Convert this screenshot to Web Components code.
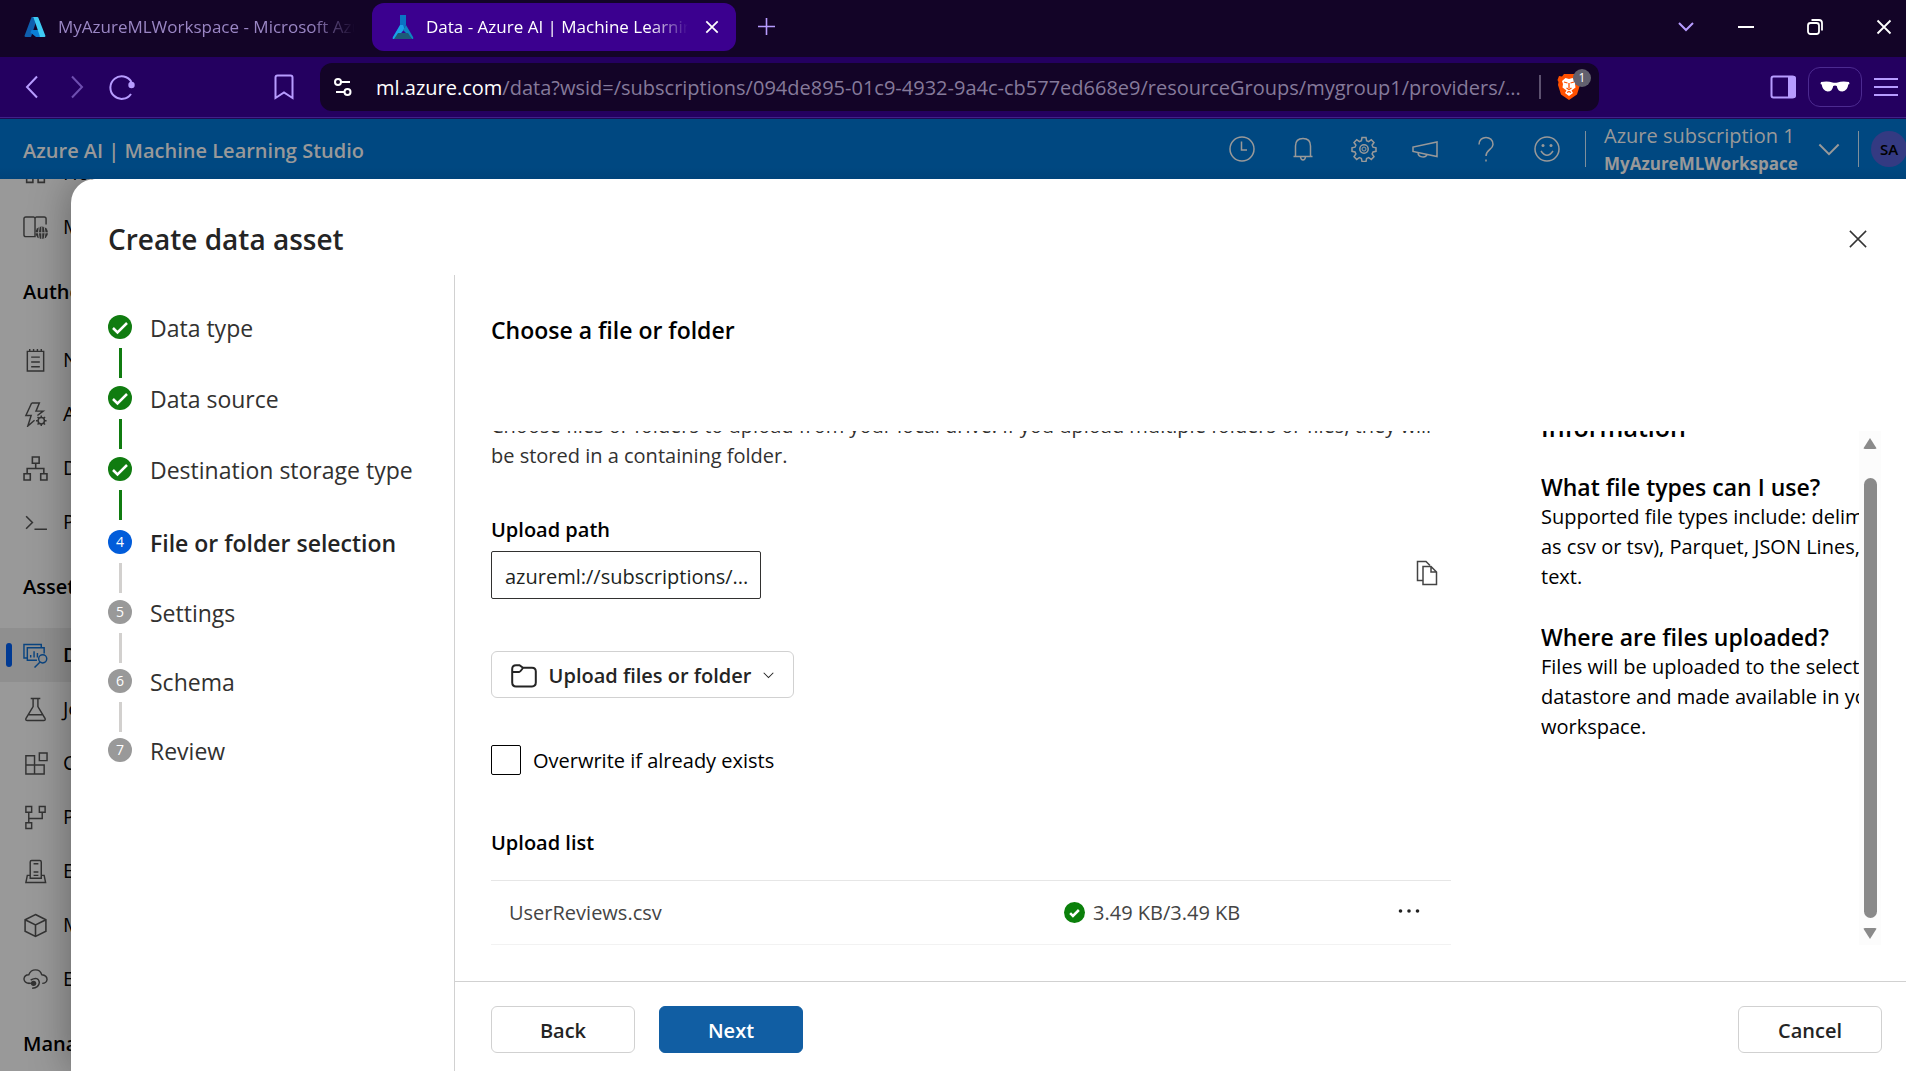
<!DOCTYPE html>
<html lang="en">
<head>
<meta charset="utf-8">
<title>Data - Azure AI | Machine Learning Studio</title>
<style>
html, body { height: 100%; }
body { margin: 0; overflow: hidden; font-family: "Open Sans", "Noto Sans", sans-serif; font-size: 20px; line-height: 30px; color: #000; }
ml-app { height: 100%; }
</style>
</head>
<body>
<ml-app></ml-app>
<script>
const ICONS = {
  azure: ['0 0 24 24', '<path fill="#0f5fae" d="M8.600 2h6L8.200 21.500c-.2.500-.7.500-1 .5H2.600c-.8 0-1.300-.6-1-1.400z"/><path fill="#0b7fd6" d="M17.200 15H8.500l-1 2.500L13 22h6z"/><path fill="#3ecbf4" d="M15.300 2.600c-.2-.4-.5-.6-1-.6H9.500c.5 0 .8.200 1 .6l6.300 18.300c.2.600-.2 1.100-.8 1.100h5.600c.6 0 1-.6.800-1.200z"/>'],
  mlflask: ['0 0 24 26', '<path fill="#0a74c4" d="M9 1h6v10l-3 5L5 25H3q-2 0-1-2L9 12z"/><path fill="#1aa0e8" d="M9 11h3l1.500 4L5 25H3q-2 0-1-2z"/><path fill="#0d86c2" d="M15 11l7 12q1 2-1 2l-9-9z"/><path fill="#1c5a78" d="M3 25l4-6h10l4 6z"/>'],
  close: ['0 0 16 16', '<path d="M1.500 1.500l13 13M14.500 1.500l-13 13"/>'],
  plus: ['0 0 16 16', '<path d="M8 0v16M0 8h16"/>'],
  down: ['0 0 16 10', '<path d="M1 1l7 7 7-7"/>'],
  min: ['0 0 16 16', '<path d="M0 8h16"/>'],
  restore: ['0 0 16 16', '<rect x="1" y="4" width="11" height="11" rx="2.500"/><path d="M4.500 1H12q3 0 3 3v7.500"/>'],
  back: ['0 0 14 24', '<path d="M12 1.500L2 12l10 10.500"/>'],
  fwd: ['0 0 14 24', '<path d="M2 1.500L12 12 2 22.500"/>'],
  reload: ['0 0 26 26', '<path d="M22 20A11.300 11.300 0 1 1 22.500 8"/><circle cx="22.500" cy="11" r="3.200" fill="currentColor" stroke="none"/>'],
  bookmark: ['0 0 20 26', '<path d="M1.500 24V3.500q0-2 2-2h13q2 0 2 2V24L10 18.500z"/>'],
  tune: ['0 0 20 20', '<circle cx="5" cy="5" r="3"/><path d="M8 5h9M3 15h8"/><circle cx="14.500" cy="15" r="3"/>'],
  brave: ['0 0 24 28', '<path fill="#ff5000" d="M7 1h10l2 2.500 3-.5 1.500 4-1 2 .5 3-3 9.500L12 27l-8-5.500L1 12l.5-3-1-2L2 3l3 .5z"/><path fill="#fff" d="M12 6l3.500-1 3.500 3-1 3 .5 3.500-4 3 1.500 2.500-4 3-4-3L9.500 17.500l-4-3L6 11 5 8l3.500-3z"/><path stroke="#ff5000" stroke-width="1.300" fill="none" d="M7 9l3.500 1M17 9l-3.500 1M12 10v5M9.500 15l2.500 1.500 2.500-1.500M10 19.500l2-1 2 1"/>'],
  panel: ['0 0 26 24', '<rect x="1.500" y="1.500" width="23" height="21" rx="2"/><path fill="currentColor" stroke="none" d="M18 1h6q2 0 2 2v18q0 2-2 2h-6z"/>'],
  glasses: ['0 0 30 14', '<path fill="currentColor" d="M1 2q7-1 11.500.5 2.500.5 5 0Q22 1 29 2l.5 2-1.200.6Q27.500 11 22.500 11.500 17.500 11.500 16.800 6q-1.800-1-3.600 0-.7 5.500-5.700 5.500Q2.500 11 1.700 4.600L.5 4z"/>'],
  menu: ['0 0 24 20', '<path d="M0 2h24M0 10h24M0 18h24"/>'],
  clock: ['0 0 26 26', '<circle cx="13" cy="13" r="12"/><path d="M12.500 5.500V14H18"/>'],
  bell: ['0 0 26 26', '<path d="M3.500 20.500h19M5.500 20.500V10q0-7.500 7.500-7.500T20.500 10v10.500M10.500 21q.5 3 2.500 3t2.500-3"/>'],
  gear: ['0 0 26 26', '<circle cx="13" cy="13" r="4.200"/><circle cx="13" cy="13" r="2" stroke-width="1"/><path d="M11 1.500h4l.6 3.200 2 .9 2.700-1.900 2.700 2.800-1.900 2.700.9 2 3 .6v3.500l-3 .7-.9 2 1.900 2.700-2.700 2.700-2.700-1.900-2 .9-.6 3.100h-4l-.6-3.100-2-.9-2.700 1.900L3 20.700 4.900 18 4 16l-3-.7v-3.500l3-.6.9-2L3 6.500l2.700-2.800 2.700 1.900 2-.9z"/>'],
  horn: ['0 0 26 26', '<path d="M25 6v14.500L1 15.500v-4.500zM6 16.500c0 5 7.500 6 9 2"/>'],
  help: ['0 0 26 26', '<path d="M6 8.500C6-1 20-1 20 8.500c0 5-7 5-7 11.500M13 23.500v2"/>'],
  smile: ['0 0 26 26', '<circle cx="13" cy="13" r="12"/><path d="M7 15q6 8.500 12 0"/><circle cx="9" cy="9.500" r="1.500" fill="currentColor" stroke="none"/><circle cx="17" cy="9.500" r="1.500" fill="currentColor" stroke="none"/>'],
  copy: ['0 0 24 26', '<path d="M8 20.500H2.500V1.500H11l4 4"/><path d="M8 6.500h8l5.500 5.500v12.500H8zM16 6.500V12h5.500"/>'],
  folder: ['0 0 26 24', '<path d="M1.200 5q0-3.800 3.800-3.800h3.500l3.500 2.600h9q3.800 0 3.800 3.800v11q0 3.800-3.800 3.800H5q-3.800 0-3.800-3.800zM1.200 8h7q1 0 3.800-4.200"/>'],
  check: ['0 0 24 24', '<path d="M5 13l4.500 4.500L19 8"/>'],
  dots: ['0 0 22 4', '<g fill="currentColor" stroke="none"><circle cx="2.500" cy="2" r="1.800"/><circle cx="11" cy="2" r="1.800"/><circle cx="19.500" cy="2" r="1.800"/></g>'],
  home: ['0 0 24 24', '<path d="M3.500 3.500h6v6h-6zM14.500 3.500h6v6h-6zM3.500 14.500h6v6h-6zM14.500 14.500h6v6h-6z"/>'],
  book: ['0 0 26 26', '<path d="M12.500 22.500H3q-2 0-2-2V4q0-2 2-2h8q1.500 0 1.500 2zM12.500 20V4q0-2 1.500-2h8q2 0 2 2v6"/><circle cx="19.500" cy="18.500" r="6.500" fill="currentColor" stroke="none"/><path stroke="#969696" stroke-width="1" d="M13 18.500h13M19.500 12v13M17 12q-2 6.500 0 13M22 12q2 6.500 0 13"/>'],
  note: ['0 0 24 26', '<path d="M3.500 3.500h17v20.500h-17zM7.500 9.500h9M7.500 14.500h9M7.500 19.500h9M6 1v2.500M10 1v2.500M14 1v2.500M18 1v2.500"/>'],
  bolt: ['0 0 26 26', '<path d="M9 1h8l-3.500 8.500H21L15 14M9 1L3 14h5.500L5 25l7-6"/><circle cx="19" cy="19.500" r="3.300"/><path d="M19 14v2M19 23v2M13.500 19.500h2M22.500 19.500h2M15.100 15.600l1.400 1.400M21.500 22l1.400 1.400M15.100 23.400l1.400-1.400M21.500 17l1.400-1.400"/>'],
  tree: ['0 0 24 24', '<path d="M9 1h6.500v6H9zM1 17h6v6H1zM17 17h6v6h-6zM12.200 7v5M4 17v-5h16v5"/>'],
  prompt: ['0 0 24 24', '<path d="M3 6l6 6-6 6M11 18.500h12"/>'],
  data: ['0 0 26 26', '<path d="M4 15.500H1V1.500h18v3M14.500 18H4.500V5H22v6M8 12.500V15M11.500 8.500V15M15 10.500V15"/><circle cx="20.500" cy="16.500" r="4.200"/><path d="M17.500 20L12 25.500"/>'],
  flask: ['0 0 24 26', '<path d="M7 1.500h10M9.500 1.500V10L2 22.500q-.5 2 1.500 2h17q2 0 1.500-2L14.500 10V1.500M5 18.500h14"/>'],
  comp: ['0 0 26 26', '<path d="M3 5h9v19H3zM3 14.500h19V24H3zM17 2h8v8h-8z"/>'],
  pipe: ['0 0 26 26', '<path d="M3 1.500h6v6H3zM17 1.500h6v6h-6zM3 18.500h6v6H3zM6 7.500v11M6 14h14V7.500"/>'],
  env: ['0 0 24 26', '<path d="M6.500 20V3q0-1.500 1.500-1.500h8.500Q18 1.500 18 3v17zM6.500 17H3.500L2 24.500h20.500L21 17h-3M10 5h5M10 13.500h5M10 17h5"/>'],
  cube: ['0 0 24 24', '<path d="M12 1.500l10 5v11l-10 5-10-5v-11zM2 6.500l10 5 10-5M12 11.500v11"/>'],
  cloud: ['0 0 26 26', '<path d="M8 17H6Q1.500 16.500 1 12.500 1.500 8 6 8 8 3 13 3t6.500 5q5.500.500 5.500 5-.5 4-5 4M8 13.500q8-4 9 2.500-.5 6-7.500 6"/><circle cx="11" cy="17" r="2.800" fill="currentColor" stroke="none"/><path d="M8 17h-3"/>']
};

function define(name, css, html) {
  customElements.define(name, class extends HTMLElement {
    connectedCallback() {
      if (this.shadowRoot) return;
      const root = this.attachShadow({ mode: 'open' });
      const markup = typeof html === 'function' ? html(this) : html;
      root.innerHTML = '<style>*{box-sizing:border-box}button,input{font:inherit;color:inherit;margin:0}button{background:none;border:0;padding:0;display:flex;align-items:center;justify-content:center}' + css + '</style>' + markup;
    }
  });
}

define('ml-icon', ':host{display:block;flex:none}svg{display:block;width:100%;height:100%}', el => {
  const name = el.getAttribute('name');
  const [box, body] = ICONS[name];
  return `<svg viewBox="${box}" fill="none" stroke="${/azure|mlflask|brave|glasses/.test(name) ? 'none' : 'currentColor'}" stroke-width="${el.getAttribute('weight') || 1.5}" aria-hidden="true">${body}</svg>`;
});

define('browser-tab', `
:host{display:flex;align-items:center;gap:11px;height:48px;padding:0 17px 0 19px;border-radius:12px;color:#9a86c4;font-size:17px}
:host([active]){background:#3b008f;color:#fff}
.fav{width:24px;height:26px}
a{flex:1;min-width:0;overflow:hidden;white-space:nowrap;color:inherit;text-decoration:none;-webkit-mask-image:linear-gradient(90deg,#000 85%,transparent);mask-image:linear-gradient(90deg,#000 85%,transparent)}
button{width:14px;height:14px;margin-left:6px}button ml-icon{width:14px;height:14px}`,
el => `<ml-icon class="fav" name="${el.getAttribute('icon')}"></ml-icon><a href="#"><slot></slot></a>${el.hasAttribute('active') ? '<button aria-label="Close tab"><ml-icon name="close" weight="2"></ml-icon></button>' : ''}`);

define('browser-tabs', `
:host{display:flex;align-items:center;height:57px;background:#130427;padding:0 14px 4px 4px}
.t1{width:368px}.t2{width:364px}
button{color:#fff}.plus{margin:0 auto 0 22px;color:#b79cff}
.plus ml-icon{width:17px;height:17px}
.v{color:#b79cff;margin-right:44px}.v ml-icon{width:16px;height:10px}
.win{display:flex;gap:53px;align-items:center}.win ml-icon{width:16px;height:16px}`,
`<browser-tab class="t1" icon="azure">MyAzureMLWorkspace - Microsoft Azure</browser-tab>
<browser-tab class="t2" icon="mlflask" active>Data - Azure AI | Machine Learning Studio</browser-tab>
<button class="plus" aria-label="New tab"><ml-icon name="plus" weight="1.500"></ml-icon></button>
<button class="v" aria-label="Tabs"><ml-icon name="down" weight="2"></ml-icon></button>
<div class="win"><button aria-label="Minimize"><ml-icon name="min" weight="2"></ml-icon></button><button aria-label="Restore"><ml-icon name="restore" weight="1.800"></ml-icon></button><button aria-label="Close"><ml-icon name="close" weight="1.800"></ml-icon></button></div>`);

define('browser-bar', `
:host{display:flex;align-items:center;height:62px;background:#240060;border-bottom:1px solid #1d0a54;box-shadow:inset 0 -1px #41208a;box-sizing:border-box;padding:0 8px 1px 25px;color:#b79cff}
.nav{display:flex;align-items:center;width:295px}
.nav .b{width:14px;height:24px}.nav .f{margin-left:31px;opacity:.5}.nav .r{width:26px;height:26px;margin-left:25px}
.nav .m{width:20px;height:26px;margin-left:auto;margin-right:26px}
.nav button{display:block}
.nav ml-icon{width:100%;height:100%}
.url{display:flex;align-items:center;flex:1;min-width:0;height:48px;border-radius:12px;background:#130427;padding:0 8px 0 13px;color:#857a9a}
.url .site{color:#fff;width:20px;height:20px;margin-right:23px}.site ml-icon{width:20px;height:20px}
.addr{flex:1;min-width:0;white-space:nowrap;overflow:hidden;padding-top:2px}.addr b{font-weight:400;color:#fff}
.sep{width:2px;height:24px;background:#5d516f;margin:0 16px 0 8px}
.shield{position:relative;width:34px;height:28px}.shield ml-icon{width:24px;height:28px;margin-right:auto}
.badge{position:absolute;right:0;top:-4px;width:18px;height:18px;border-radius:50%;background:#62606e;color:#fff;font-size:12px;line-height:18px;text-align:center}
.right{display:flex;align-items:center;gap:12px;margin-left:171px}
.p ml-icon{width:26px;height:24px}
.g{width:54px;height:40px;border:1px solid #4c2a90;border-radius:12px;color:#fff}.g ml-icon{width:30px;height:14px}
.h ml-icon{width:24px;height:20px}`,
`<div class="nav"><button class="b" aria-label="Back"><ml-icon name="back" weight="2"></ml-icon></button><button class="b f" aria-label="Forward"><ml-icon name="fwd" weight="2"></ml-icon></button><button class="r" aria-label="Reload"><ml-icon name="reload" weight="2"></ml-icon></button><button class="m" aria-label="Bookmark"><ml-icon name="bookmark" weight="2"></ml-icon></button></div>
<div class="url"><button class="site" aria-label="Site settings"><ml-icon name="tune" weight="2"></ml-icon></button><div class="addr"><b>ml.azure.com</b>/data?wsid=/subscriptions/094de895-01c9-4932-9a4c-cb577ed668e9/resourceGroups/mygroup1/providers/...</div><div class="sep"></div><button class="shield" aria-label="Shields"><ml-icon name="brave"></ml-icon><span class="badge">1</span></button></div>
<div class="right"><button class="p" aria-label="Sidebar"><ml-icon name="panel" weight="2"></ml-icon></button><button class="g" aria-label="Private window"><ml-icon name="glasses"></ml-icon></button><button class="h" aria-label="Menu"><ml-icon name="menu" weight="2"></ml-icon></button></div>`);

define('studio-header', `
:host{display:flex;align-items:center;height:60px;background:linear-gradient(#004881 80%,#00437a);color:#999;padding-left:23px;overflow:hidden}
h1{margin:0 auto 0 0;padding-top:3px;font-size:20px;font-weight:600;line-height:30px;white-space:nowrap}
.tools{display:flex;gap:35px;margin-right:25px}.tools ml-icon{width:26px;height:26px}
.sep{width:1px;height:36px;background:#7f8f9b}
.ws{display:flex;align-items:center;width:272px;padding:2px 18px 0;white-space:nowrap}
.ws div{flex:1;line-height:28px}.ws b{display:block;font-size:17px}
.ws ml-icon{width:22px;height:14px}
.me{width:36px;height:36px;flex:none;margin:0 -1px 0 12px;border-radius:50%;background:#343a82;color:#000;font-size:15px;font-weight:600}`,
`<h1>Azure AI | Machine Learning Studio</h1>
<div class="tools">${['clock', 'bell', 'gear', 'horn', 'help', 'smile'].map(n => `<button aria-label="${n}"><ml-icon name="${n}"></ml-icon></button>`).join('')}</div>
<div class="sep"></div><div class="ws"><div>Azure subscription 1<b>MyAzureMLWorkspace</b></div><button aria-label="Switch workspace"><ml-icon name="down" weight="1.400"></ml-icon></button></div><div class="sep"></div><button class="me">SA</button>`);

define('side-item', `
:host{display:flex;align-items:center;height:54px;padding-left:6px;color:#333}
i{flex:none;width:6px;height:24px;border-radius:3px;margin-right:11px}
a{flex:none;display:flex;align-items:center;gap:15px;color:inherit;text-decoration:none;white-space:nowrap}
span{color:#000}ml-icon{width:25px;height:25px}
:host([active]){background:#8f8f8f;color:#0a4480}:host([active]) i{background:#003a94}:host([active]) span{font-weight:600}`,
el => `<i></i><a href="#"><ml-icon name="${el.getAttribute('icon')}"></ml-icon><span><slot></slot></span></a>`);

define('side-nav', `
:host{display:block;width:95px;height:100%;overflow:hidden;background:#999}
nav{margin-top:-33px}
h2{margin:0;height:79px;line-height:76px;padding-left:23px;font-size:20px;font-weight:600}`,
`<nav><side-item icon="home">Home</side-item><side-item icon="book">Model catalog</side-item>
<h2>Authoring</h2>
<side-item icon="note">Notebooks</side-item><side-item icon="bolt">Automated ML</side-item><side-item icon="tree">Designer</side-item><side-item icon="prompt">Prompt flow</side-item>
<h2>Assets</h2>
<side-item icon="data" active>Data</side-item><side-item icon="flask">Jobs</side-item><side-item icon="comp">Components</side-item><side-item icon="pipe">Pipelines</side-item><side-item icon="env">Environments</side-item><side-item icon="cube">Models</side-item><side-item icon="cloud">Endpoints</side-item>
<h2>Manage</h2></nav>`);

define('wizard-step', `
:host{display:flex;gap:18px;height:69px;color:#323130;font-size:23px;line-height:26px;white-space:nowrap}
:host([state=done]){height:71px}:host([state=current]){height:72px;padding-top:2px;font-weight:600;color:#242424}
.rail{display:flex;flex-direction:column;align-items:center;gap:9px;width:24px;height:63px}
.dot{width:24px;height:24px;border-radius:50%;background:#999;color:#fff;font-size:14px;line-height:24px;font-weight:400;text-align:center}
.line{width:3px;height:30px;background:#d2d0ce}
:host([last]) .line{display:none}
:host([state=done]) .dot,:host([state=done]) .line{background:#107c10}
:host([state=current]) .dot{background:#015cda}
ml-icon{width:24px;height:24px}`,
el => `<div class="rail"><div class="dot">${el.getAttribute('state') === 'done' ? '<ml-icon name="check" weight="2.500"></ml-icon>' : el.getAttribute('n')}</div><div class="line"></div></div><div><slot></slot></div>`);

define('wizard-steps', ':host{display:block;padding:40px 0 0 37px}',
`<wizard-step state="done">Data type</wizard-step><wizard-step state="done">Data source</wizard-step><wizard-step state="done">Destination storage type</wizard-step><wizard-step state="current" n="4">File or folder selection</wizard-step><wizard-step n="5">Settings</wizard-step><wizard-step n="6">Schema</wizard-step><wizard-step n="7" last>Review</wizard-step>`);

define('ui-button', `
:host{display:inline-flex}
button{height:47px;width:144px;border:1px solid #d1d1d1;border-radius:6px;background:#fff;color:#242424;font-weight:600;line-height:30px;padding-top:2px}
:host([primary]) button{background:#115ea3;border-color:#115ea3;color:#fff}`,
'<button><slot></slot></button>');

define('upload-form', `
:host{display:block;flex:1;min-width:0;max-width:960px}
p{margin:-20px 0 44px;color:#323130;white-space:nowrap}
.lab{display:block;font-weight:600}
.path{display:flex;align-items:center;justify-content:space-between;margin:6px 0 52px}
input[type=text]{width:270px;height:48px;border:1px solid #323130;border-radius:2px;padding:2px 2px 0 13px;color:#201f1e;background:#fff}
.copy{margin-right:12px;padding-bottom:4px;color:#444}.copy ml-icon{width:24px;height:26px}
.up{width:303px;height:47px;border:1px solid #d1d1d1;border-radius:6px;gap:12px;padding-top:2px;font-weight:600;color:#242424;white-space:nowrap}
.up .fo{width:26px;height:24px}.up .ch{width:11px;height:7px}
.chk{display:flex;align-items:center;gap:12px;margin:46px 0 52px}
.chk input{appearance:none;width:30px;height:30px;border:1px solid #000;border-radius:2px}
.chk label{padding-top:2px}
h3{margin:0 0 22px;font-size:20px;font-weight:600}
table{width:100%;border-collapse:collapse;table-layout:fixed;color:#444}
td{height:64px;padding:0;border-top:1px solid #e6e6e6;border-bottom:1px solid #f2f2f2}
td:first-child{padding-left:18px}.size{width:334px}.act{width:53px}
.s{display:flex;align-items:center;gap:8px}
.ok{width:21px;height:21px;border-radius:50%;background:#0b800b;color:#fff;padding:3px}.ok ml-icon{width:15px;height:15px}
.act button{padding-bottom:4px}.act ml-icon{width:22px;height:4px;color:#222}`,
`<p>Choose files or folders to upload from your local drive. If you upload multiple folders or files, they will<br>be stored in a containing folder.</p>
<label class="lab" for="path">Upload path</label>
<div class="path"><input id="path" type="text" value="azureml://subscriptions/..." readonly><button class="copy" aria-label="Copy"><ml-icon name="copy" weight="1.500"></ml-icon></button></div>
<button class="up"><ml-icon class="fo" name="folder" weight="2"></ml-icon>Upload files or folder<ml-icon class="ch" name="down" weight="1.500"></ml-icon></button>
<div class="chk"><input id="ow" type="checkbox"><label for="ow">Overwrite if already exists</label></div>
<h3>Upload list</h3>
<table><tr><td>UserReviews.csv</td><td class="size"><div class="s"><span class="ok"><ml-icon name="check" weight="4"></ml-icon></span>3.49 KB/3.49 KB</div></td><td class="act"><button aria-label="More"><ml-icon name="dots"></ml-icon></button></td></tr></table>`);

define('info-panel', `
:host{display:block;width:318px;overflow:hidden;white-space:nowrap}
section{margin-bottom:30px}h3{margin:0;font-size:23px;line-height:30px;font-weight:600}p{margin:0}
.head{margin-top:-19px}.head h3{font-size:25px}`,
`<section class="head"><h3>Information</h3></section>
<section><h3>What file types can I use?</h3><p>Supported file types include: delimited (such<br>as csv or tsv), Parquet, JSON Lines, and plain<br>text.</p></section>
<section><h3>Where are files uploaded?</h3><p>Files will be uploaded to the selected<br>datastore and made available in your<br>workspace.</p></section>`);

define('scroll-rail', `
:host{display:flex;flex-direction:column;align-items:center;width:22px;background:#fcfcfc;padding:7px 0 6px}
.a{border:7px solid transparent;border-top:0;border-bottom:11px solid #8a8a8a;border-radius:2px}
.d{transform:rotate(180deg)}
.t{flex:1;width:13px;border-radius:7px;background:#8a8a8a;margin:29px 0 10px}`,
'<div class="a"></div><div class="t"></div><div class="a d"></div>');

define('asset-dialog', `
:host{display:grid;grid-template:96px 1fr / 383px 1fr;background:#fff;border-radius:24px 0 0 0;box-shadow:0 0 40px rgba(0,0,0,.35)}
header{grid-column:1/3;display:flex;align-items:center;justify-content:space-between;padding:24px 38px 0 37px}
header h2{margin:0;font-size:28px;line-height:40px;font-weight:600;color:#242424}
header ml-icon{width:20px;height:20px;color:#333}
main{display:flex;flex-direction:column;min-height:0;min-width:0;border-left:1px solid #d1d1d1}
h2.t{margin:40px 36px 86px;font-size:23px;line-height:30px;font-weight:600}
.scroll{flex:1;min-height:0;display:flex;justify-content:space-between;overflow:hidden;padding:0 25px 0 36px}
.side{display:flex}
footer{display:flex;gap:24px;padding:24px 24px 18px 36px;margin-top:36px;border-top:1px solid #d1d1d1}
footer ui-button:last-child{margin-left:auto}`,
`<header><h2>Create data asset</h2><button aria-label="Close"><ml-icon name="close" weight="1.200"></ml-icon></button></header>
<wizard-steps></wizard-steps>
<main><h2 class="t">Choose a file or folder</h2>
<div class="scroll"><upload-form></upload-form><div class="side"><info-panel></info-panel><scroll-rail></scroll-rail></div></div>
<footer><ui-button>Back</ui-button><ui-button primary>Next</ui-button><ui-button>Cancel</ui-button></footer></main>`);

define('ml-app', `
:host{display:flex;flex-direction:column}
.work{position:relative;flex:1;min-height:0;overflow:hidden;background:#999}
asset-dialog{position:absolute;inset:0 0 0 71px}`,
`<browser-tabs></browser-tabs><browser-bar></browser-bar><studio-header></studio-header>
<div class="work"><side-nav></side-nav><asset-dialog role="dialog" aria-label="Create data asset"></asset-dialog></div>`);
</script>
</body>
</html>
